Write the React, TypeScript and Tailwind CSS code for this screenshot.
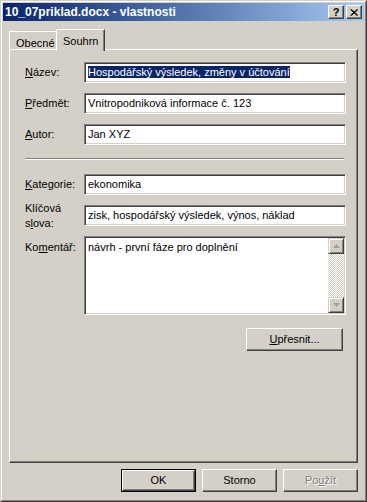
import React from "react"

const font = { fontFamily: '"Liberation Sans", Arial, sans-serif' }

function U({ children }: { children: React.ReactNode }) {
  return <span className="underline underline-offset-[1px]">{children}</span>
}

function Field({ label, children, h = "h-[21px]", top = false }: { label: React.ReactNode; children: React.ReactNode; h?: string; top?: boolean }) {
  return (
    <div className={`flex ${top ? "items-start" : "items-center"}`}>
      <div className={`w-[59px] leading-[15px] ${top ? "pt-[4px]" : "h-[21px] flex flex-col justify-center"}`}>
        <div>{label}</div>
      </div>
      <div className={`w-[262px] ${h} bg-white border border-t-[#808080] border-l-[#808080] border-b-white border-r-white shadow-[inset_1px_1px_#404040,inset_-1px_-1px_#d4d0c8]`}>
        {children}
      </div>
    </div>
  )
}

function Btn({ children, def = false, disabled = false, w = "w-[75px]" }: { children: React.ReactNode; def?: boolean; disabled?: boolean; w?: string }) {
  const inner = (
    <div className="h-full flex items-center justify-center border border-t-white border-l-white border-b-[#404040] border-r-[#404040] shadow-[inset_-1px_-1px_#808080]">
      <span className={disabled ? "text-[#808080] [text-shadow:1px_1px_#fff]" : "text-black"}>{children}</span>
    </div>
  )
  if (def) return <div className={`${w} h-[23px] border border-black`}>{inner}</div>
  return <div className={`${w} h-[23px]`}>{inner}</div>
}

function Arrow({ up }: { up: boolean }) {
  return (
    <div className="w-[16px] h-[16px] bg-[#d4d0c8] flex items-center justify-center border border-t-[#d4d0c8] border-l-[#d4d0c8] border-b-[#404040] border-r-[#404040] shadow-[inset_1px_1px_#fff,inset_-1px_-1px_#808080]">
      <svg width="7" height="4" viewBox="0 0 7 4">
        {up ? <path d="M3.5 0 L7 4 L0 4 Z" fill="#a0a0a0" /> : <path d="M0 0 L7 0 L3.5 4 Z" fill="#a0a0a0" />}
      </svg>
    </div>
  )
}

export default function App() {
  return (
    <div style={font} className="w-[367px] h-[502px] text-[11px] text-black bg-[#d4d0c8] border border-t-[#d4d0c8] border-l-[#d4d0c8] border-b-[#404040] border-r-[#404040]">
      <div className="h-full flex flex-col p-px border border-t-white border-l-white border-b-[#808080] border-r-[#808080]">
        {/* title bar */}
        <div className="h-[18px] flex items-center pl-[2px] pr-[2px] bg-gradient-to-r from-[#0a246a] to-[#a6caf0]">
          <span className="text-white font-bold text-[12px] flex-1">10_07priklad.docx - vlastnosti</span>
          <div className="flex gap-[2px]">
            <div className="w-[16px] h-[14px] bg-[#d4d0c8] flex items-center justify-center border border-t-white border-l-white border-b-[#404040] border-r-[#404040] shadow-[inset_-1px_-1px_#808080]">
              <span className="font-bold text-[11px] leading-none">?</span>
            </div>
            <div className="w-[16px] h-[14px] bg-[#d4d0c8] flex items-center justify-center border border-t-white border-l-white border-b-[#404040] border-r-[#404040] shadow-[inset_-1px_-1px_#808080]">
              <svg width="8" height="7" viewBox="0 0 8 7">
                <path d="M0.5 0.5 L7 6.5 M1.5 0.5 L8 6.5 M7 0.5 L0.5 6.5 M8 0.5 L1.5 6.5" stroke="#000" strokeWidth="1" />
              </svg>
            </div>
          </div>
        </div>

        {/* tabs */}
        <div className="flex items-end h-[28px] pl-[6px]">
          <div className="h-[18px] w-[48px] pl-[6px] pt-[3px] border-t border-l border-t-white border-l-white shadow-[inset_-1px_0_#808080]">
            Obecné
          </div>
          <div className="relative z-10 -mb-[2px] h-[22px] w-[49px] -ml-px bg-[#d4d0c8] pl-[6px] pt-[3px] border-t border-l border-r border-t-white border-l-white border-r-[#404040] shadow-[inset_-1px_0_#808080]">
            Souhrn
          </div>
        </div>

        {/* panel */}
        <div className="ml-[6px] w-[349px] h-[414px] flex flex-col pt-[12px] pl-[15px] border border-t-white border-l-white border-b-[#404040] border-r-[#404040] shadow-[inset_-1px_-1px_#808080]">
          <div className="flex flex-col gap-[10px]">
            <Field label={<><U>N</U>ázev:</>}>
              <div className="pl-[3px] pt-[3px] leading-[13px]">
                <span className="bg-[#0a246a] text-white">Hospodářský výsledek, změny v účtování</span>
              </div>
            </Field>
            <Field label={<><U>P</U>ředmět:</>}>
              <div className="pl-[3px] pt-[3px] leading-[13px]">Vnitropodniková informace č. 123</div>
            </Field>
            <Field label={<><U>A</U>utor:</>}>
              <div className="pl-[3px] pt-[3px] leading-[13px]">Jan XYZ</div>
            </Field>
          </div>

          <div className="w-[319px] h-[2px] mt-[13px] mb-[14px] border-t border-b border-t-[#808080] border-b-white" />

          <div className="flex flex-col gap-[10px]">
            <Field label={<><U>K</U>ategorie:</>}>
              <div className="pl-[3px] pt-[3px] leading-[13px]">ekonomika</div>
            </Field>
            <Field label={<>Klíčová<br />s<U>l</U>ova:</>}>
              <div className="pl-[3px] pt-[3px] leading-[13px]">zisk, hospodářský výsledek, výnos, náklad</div>
            </Field>
          </div>

          <div className="mt-[10px]">
            <Field top h="h-[79px]" label={<>Ko<U>m</U>entář:</>}>
              <div className="h-full flex p-[1px]">
                <div className="flex-1 pl-[2px] pt-[3px] leading-[13px]">návrh - první fáze pro doplnění</div>
                <div className="w-[16px] h-full flex flex-col bg-[repeating-conic-gradient(#d4d0c8_0%_25%,#ffffff_0%_50%)] bg-[length:2px_2px]">
                  <Arrow up />
                  <div className="flex-1" />
                  <Arrow up={false} />
                </div>
              </div>
            </Field>
          </div>

          <div className="flex justify-end pr-[14px] mt-[13px]">
            <Btn w="w-[97px]"><U>U</U>přesnit...</Btn>
          </div>
        </div>

        {/* bottom buttons */}
        <div className="flex justify-end gap-[6px] pr-[6px] mt-[6px]">
          <Btn def>OK</Btn>
          <Btn>Storno</Btn>
          <Btn disabled>Po<U>u</U>žít</Btn>
        </div>
      </div>
    </div>
  )
}
